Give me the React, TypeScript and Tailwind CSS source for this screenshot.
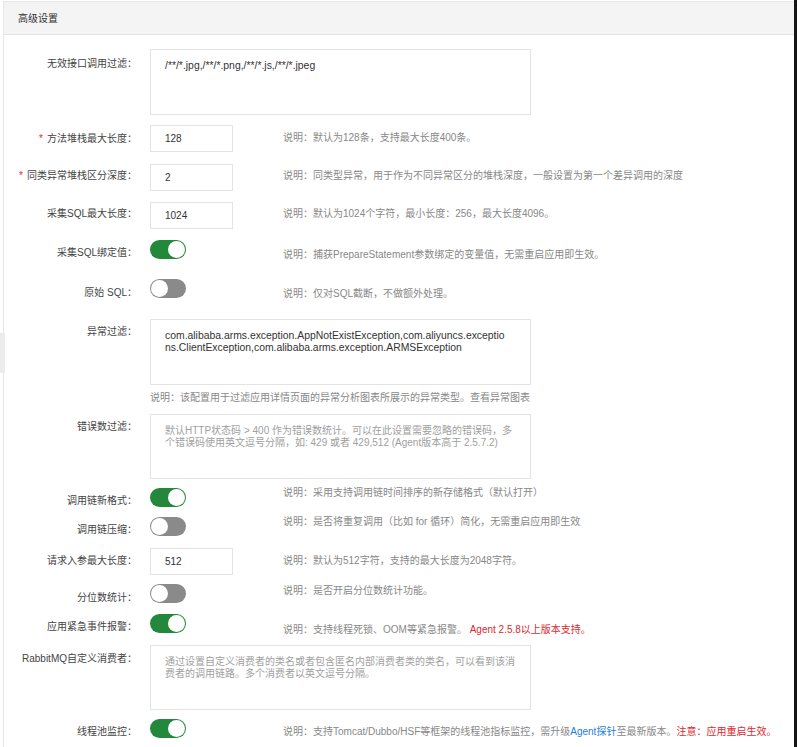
import React from "react";

type LP = { mt: string; req?: boolean; children: React.ReactNode };
const Label = ({ mt, req, children }: LP) => (
  <div className={`w-[133px] shrink-0 text-right text-[10px] leading-[14px] text-[#444] ${mt}`}>
    {req && <span className="text-[#e0282e] mr-[4px]">*</span>}
    {children}：
  </div>
);

const Desc = ({ mt, children }: { mt: string; children: React.ReactNode }) => (
  <div className={`text-[10px] leading-[14px] text-[#888] whitespace-nowrap ${mt}`}>{children}</div>
);

const Input = ({ value }: { value: string }) => (
  <div className="w-[83px] h-[27px] border border-[#e3e3e3] flex items-center pl-[14px] text-[10px] text-[#333] bg-white">
    {value}
  </div>
);

const Switch = ({ on }: { on?: boolean }) => (
  <div
    className={`w-[36px] h-[19px] rounded-full p-[1px] flex ${
      on ? "bg-[#23883b] justify-end" : "bg-[#8a8a8a] justify-start"
    }`}
  >
    <div className="w-[17px] h-[17px] rounded-full bg-white" />
  </div>
);

const Area = ({ h, lines, placeholder }: { h: string; lines: string[]; placeholder?: boolean }) => (
  <div
    className={`w-[381px] border border-[#e3e3e3] bg-white pl-[14px] pt-[10px] leading-[12px] whitespace-nowrap ${h} ${
      placeholder ? "text-[#a0a0a0] text-[10px]" : "text-[#333] text-[10.4px]"
    }`}
  >
    {lines.map((l, i) => (
      <div key={i}>{l}</div>
    ))}
  </div>
);

export default function App() {
  return (
    <div className="flex w-[797px] h-[747px] bg-white overflow-hidden font-['Liberation_Sans','Noto_Sans_CJK_SC',sans-serif]">
      <div className="relative flex-1">
        <div className="absolute left-0 top-[333px] w-[5px] h-[40px] bg-[#ececec]" />
        <div className="ml-[3px] mt-[1px] h-full border-l border-t border-[#e8e8e8]">
          <div className="h-[33px] bg-[#f4f4f4] border-b border-[#e4e4e4] flex items-center pl-[14px] text-[10px] text-[#333]">
            高级设置
          </div>
          <div className="pt-[14px]">
            <div className="flex items-start h-[76px]">
              <Label mt="mt-[8px]">无效接口调用过滤</Label>
              <div className="ml-[13px]">
                <Area h="h-[66px]" lines={["/**/*.jpg,/**/*.png,/**/*.js,/**/*.jpeg"]} />
              </div>
            </div>

            <div className="flex items-start h-[39px]">
              <Label mt="mt-[7px]" req>方法堆栈最大长度</Label>
              <div className="ml-[13px] w-[133px] shrink-0">
                <Input value="128" />
              </div>
              <Desc mt="mt-[6px]">说明：默认为128条，支持最大长度400条。</Desc>
            </div>

            <div className="flex items-start h-[38px]">
              <Label mt="mt-[5px]" req>同类异常堆栈区分深度</Label>
              <div className="ml-[13px] w-[133px] shrink-0">
                <Input value="2" />
              </div>
              <Desc mt="mt-[5px]">说明：同类型异常，用于作为不同异常区分的堆栈深度，一般设置为第一个差异调用的深度</Desc>
            </div>

            <div className="flex items-start h-[38px]">
              <Label mt="mt-[5px]">采集SQL最大长度</Label>
              <div className="ml-[13px] w-[133px] shrink-0">
                <Input value="1024" />
              </div>
              <Desc mt="mt-[5px]">说明：默认为1024个字符，最小长度：256，最大长度4096。</Desc>
            </div>

            <div className="flex items-start h-[39px]">
              <Label mt="mt-[6px]">采集SQL绑定值</Label>
              <div className="ml-[13px] w-[133px] shrink-0">
                <Switch on />
              </div>
              <Desc mt="mt-[8px]">说明：捕获PrepareStatement参数绑定的变量值，无需重启应用即生效。</Desc>
            </div>

            <div className="flex items-start h-[40px]">
              <Label mt="mt-[7px]">原始 SQL</Label>
              <div className="ml-[13px] w-[133px] shrink-0">
                <Switch />
              </div>
              <Desc mt="mt-[8px]">说明：仅对SQL截断，不做额外处理。</Desc>
            </div>

            <div className="flex items-start h-[95px]">
              <Label mt="mt-[6px]">异常过滤</Label>
              <div className="ml-[13px] flex flex-col">
                <Area
                  h="h-[66px]"
                  lines={[
                    "com.alibaba.arms.exception.AppNotExistException,com.aliyuncs.exceptio",
                    "ns.ClientException,com.alibaba.arms.exception.ARMSException",
                  ]}
                />
                <Desc mt="mt-[6px]">说明：该配置用于过滤应用详情页面的异常分析图表所展示的异常类型。查看异常图表</Desc>
              </div>
            </div>

            <div className="flex items-start h-[72px]">
              <Label mt="mt-[6px]">错误数过滤</Label>
              <div className="ml-[13px]">
                <Area
                  h="h-[65px]"
                  placeholder
                  lines={[
                    "默认HTTP状态码 > 400 作为错误数统计。可以在此设置需要忽略的错误码，多",
                    "个错误码使用英文逗号分隔，如: 429 或者 429,512 (Agent版本高于 2.5.7.2)",
                  ]}
                />
              </div>
            </div>

            <div className="flex items-start h-[29px]">
              <Label mt="mt-[8px]">调用链新格式</Label>
              <div className="ml-[13px] w-[133px] shrink-0 mt-[2px]">
                <Switch on />
              </div>
              <Desc mt="mt-0">说明：采用支持调用链时间排序的新存储格式（默认打开）</Desc>
            </div>

            <div className="flex items-start h-[33px]">
              <Label mt="mt-[8px]">调用链压缩</Label>
              <div className="ml-[13px] w-[133px] shrink-0 mt-[2px]">
                <Switch />
              </div>
              <Desc mt="mt-0">说明：是否将重复调用（比如 for 循环）简化，无需重启应用即生效</Desc>
            </div>

            <div className="flex items-start h-[36px]">
              <Label mt="mt-[6px]">请求入参最大长度</Label>
              <div className="ml-[13px] w-[133px] shrink-0">
                <Input value="512" />
              </div>
              <Desc mt="mt-[6px]">说明：默认为512字符，支持的最大长度为2048字符。</Desc>
            </div>

            <div className="flex items-start h-[30px]">
              <Label mt="mt-[7px]">分位数统计</Label>
              <div className="ml-[13px] w-[133px] shrink-0">
                <Switch />
              </div>
              <Desc mt="mt-0">说明：是否开启分位数统计功能。</Desc>
            </div>

            <div className="flex items-start h-[31px]">
              <Label mt="mt-[6px]">应用紧急事件报警</Label>
              <div className="ml-[13px] w-[133px] shrink-0">
                <Switch on />
              </div>
              <Desc mt="mt-[9px]">
                说明：支持线程死锁、OOM等紧急报警。 <span className="text-[#e0282e]">Agent 2.5.8以上版本支持。</span>
              </Desc>
            </div>

            <div className="flex items-start h-[74px]">
              <Label mt="mt-[7px]">RabbitMQ自定义消费者</Label>
              <div className="ml-[13px]">
                <Area
                  h="h-[65px]"
                  placeholder
                  lines={[
                    "通过设置自定义消费者的类名或者包含匿名内部消费者类的类名，可以看到该消",
                    "费者的调用链路。多个消费者以英文逗号分隔。",
                  ]}
                />
              </div>
            </div>

            <div className="flex items-start h-[29px]">
              <Label mt="mt-[6px]">线程池监控</Label>
              <div className="ml-[13px] w-[133px] shrink-0">
                <Switch on />
              </div>
              <Desc mt="mt-[6px]">
                说明：支持Tomcat/Dubbo/HSF等框架的线程池指标监控，需升级
                <span className="text-[#1e7fd6]">Agent探针</span>至最新版本。
                <span className="text-[#e0282e]">注意：应用重启生效。</span>
              </Desc>
            </div>
          </div>
        </div>
      </div>
      <div className="w-[3px] shrink-0 bg-[#151515]" />
    </div>
  );
}
